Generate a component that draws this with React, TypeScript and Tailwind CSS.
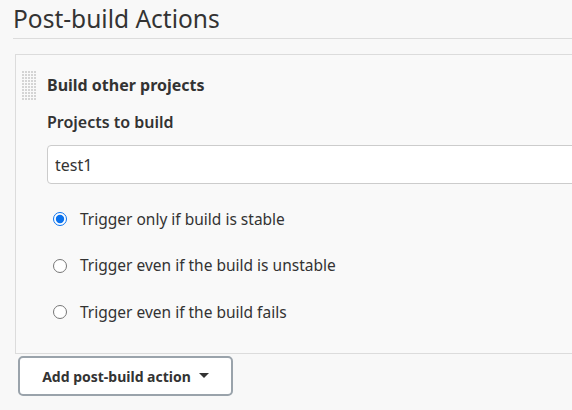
import React, { useState } from 'react';

const options = [
  'Trigger only if build is stable',
  'Trigger even if the build is unstable',
  'Trigger even if the build fails',
];

const DragHandle: React.FC = () => (
  <svg width="14" height="30" viewBox="0 0 14 30" className="shrink-0">
    {Array.from({ length: 10 }).map((_, r) =>
      Array.from({ length: 5 }).map((_, c) => (
        <rect key={`${r}-${c}`} x={c * 3} y={r * 3} width="2" height="2" fill="#d4d4d4" />
      ))
    )}
  </svg>
);

const App: React.FC = () => {
  const [choice, setChoice] = useState(0);
  const [projects, setProjects] = useState('test1');

  return (
    <div
      className="w-[572px] h-[410px] overflow-hidden bg-[#f8f8f8] text-[#333] pl-[13px]"
      style={{ fontFamily: '"Noto Sans", "Open Sans", sans-serif' }}
    >
      <h2 className="w-[700px] text-[24.5px] leading-[38px] h-[39px] border-b border-[#dcdcdc] font-normal">
        Post-build Actions
      </h2>

      <div className="ml-[2px] mt-[15px] w-[700px] h-[300px] border border-[#dcdcdc] bg-[#f9f9f9] flex">
        <div className="pl-[6px] pt-[16px]">
          <DragHandle />
        </div>
        <div className="pl-[11px] pt-[19px] flex-1">
          <div className="text-[16px] font-bold leading-[22px]">Build other projects</div>
          <div className="mt-[15px] text-[16px] font-semibold leading-[22px]">Projects to build</div>
          <input
            value={projects}
            onChange={(e) => setProjects(e.target.value)}
            className="mt-[12px] w-[600px] h-[39px] bg-white border border-[#ccc] rounded-[4px] px-[7px] text-[16px] outline-none text-[#333]"
          />
          <div className="mt-[12px] flex flex-col">
            {options.map((label, i) => (
              <label key={label} className="flex items-center h-[46.5px] pl-[6px] cursor-pointer">
                <input
                  type="radio"
                  name="trigger"
                  checked={choice === i}
                  onChange={() => setChoice(i)}
                  className="w-[14px] h-[14px] m-0 accent-[#0b72ed]"
                />
                <span className="ml-[13px] text-[15.5px]">{label}</span>
              </label>
            ))}
          </div>
        </div>
      </div>

      <button className="ml-[5px] mt-[2px] w-[215px] h-[40px] border-2 border-[#9aa3ab] rounded-[5px] bg-white flex items-center justify-center gap-[8px] text-[14px] font-bold text-[#333]">
        Add post-build action
        <svg width="10" height="6" viewBox="0 0 10 6">
          <path d="M0 0 L10 0 L5 5 Z" fill="#333" />
        </svg>
      </button>
    </div>
  );
};

export default App;
